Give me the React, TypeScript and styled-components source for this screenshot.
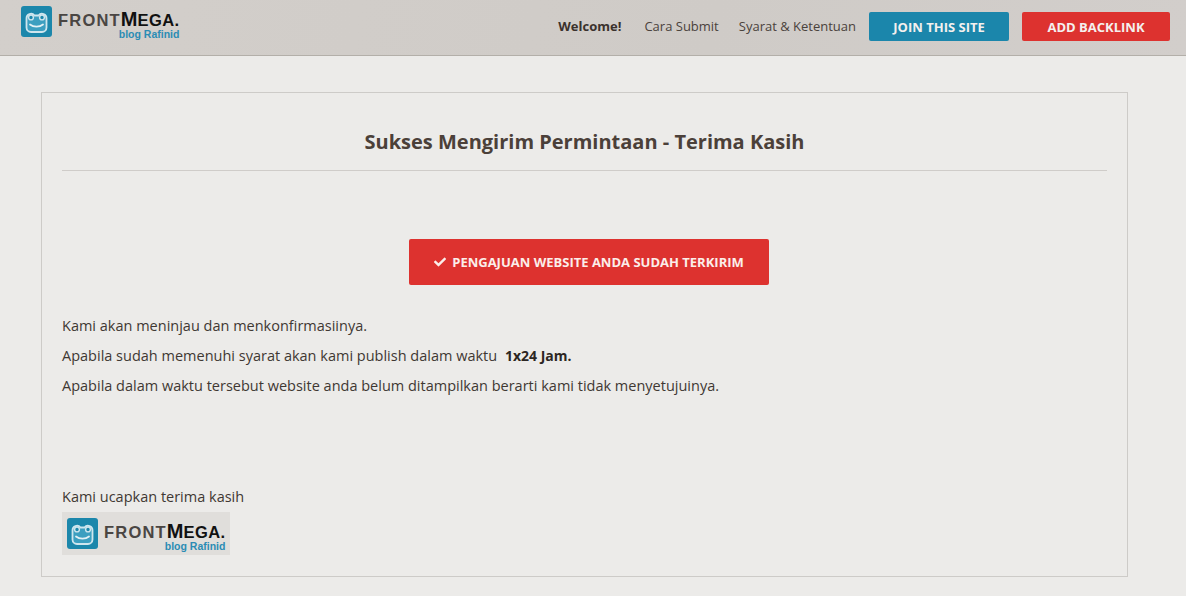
import { FaCheck } from "react-icons/fa";
import styled, { createGlobalStyle } from "styled-components";

const GlobalStyle = createGlobalStyle`
  html, body {
    margin: 0;
    padding: 0;
    background: #ecebe9;
    font-family: "Open Sans", "Liberation Sans", sans-serif;
    color: #3f3833;
  }
`;

const Header = styled.header`
  height: 56px;
  box-sizing: border-box;
  display: flex;
  align-items: flex-start;
  justify-content: space-between;
  padding: 6px 16px 0 21px;
  background: linear-gradient(100deg, #d3cfcb, #cfcbc7 60%, #d2cecb);
  border-bottom: 1px solid #b3afa9;
`;

const Nav = styled.nav`
  display: flex;
  align-items: center;
  height: 29px;
  margin-top: 6px;
`;

const NavItem = styled.a<{ $bold?: boolean; $gap: number }>`
  font-size: 13px;
  font-weight: ${(p) => (p.$bold ? 700 : 400)};
  color: ${(p) => (p.$bold ? "#3a322d" : "#4a423c")};
  margin: 0 ${(p) => p.$gap}px 2px 0;
  white-space: nowrap;
`;

const NavButton = styled.a<{ $color: string; $width: number; $gap?: number }>`
  display: flex;
  align-items: center;
  justify-content: center;
  height: 29px;
  width: ${(p) => p.$width}px;
  margin-left: ${(p) => p.$gap || 0}px;
  background: ${(p) => p.$color};
  border-radius: 2px;
  color: #f4f0ee;
  font-size: 13px;
  font-weight: 700;
`;

const LogoWrap = styled.div`
  display: flex;
  align-items: flex-start;
  gap: 6px;
`;

const LogoWords = styled.div`
  display: flex;
  flex-direction: column;
  align-items: flex-end;
  padding-top: 3px;
`;

const LogoName = styled.div`
  font-family: "Liberation Sans", sans-serif;
  font-weight: 700;
  font-size: 20px;
  line-height: 20px;
  color: #111;
  white-space: nowrap;
`;

const LogoSmall = styled.span<{ $grey?: boolean; $spacing: number }>`
  font-size: 16.5px;
  text-transform: uppercase;
  color: ${(p) => (p.$grey ? "#4a4643" : "#111")};
  letter-spacing: ${(p) => p.$spacing}px;
`;

const LogoTag = styled.div`
  font-family: "Liberation Sans", sans-serif;
  font-weight: 700;
  font-size: 10.5px;
  line-height: 9px;
  color: #2b8cb4;
`;

const Card = styled.main`
  box-sizing: border-box;
  height: 485px;
  margin: 36px 58px 0 41px;
  padding: 0 20px;
  border: 1px solid #cdcbc8;
`;

const Title = styled.h1`
  margin: 0;
  height: 78px;
  box-sizing: border-box;
  padding-top: 34px;
  text-align: center;
  font-size: 20px;
  line-height: 30px;
  font-weight: 700;
  color: #4b4039;
  border-bottom: 1px solid #cfccc9;
`;

const NoticeRow = styled.div`
  display: flex;
  justify-content: center;
  padding: 68px 0 26px 9px;
`;

const Notice = styled.div`
  display: flex;
  align-items: center;
  justify-content: center;
  gap: 6px;
  width: 360px;
  height: 46px;
  border-radius: 2px;
  background: #dd322f;
  color: #fbeeea;
  font-size: 13px;
  font-weight: 700;
  svg {
    width: 12px;
    height: 12px;
  }
`;

const Line = styled.p`
  margin: 0;
  font-size: 14.5px;
  line-height: 30px;
  color: #3f3833;
`;

const Strong = styled.strong`
  margin-left: 4px;
  font-size: 14px;
  font-weight: 700;
  color: #2c2622;
`;

const Thanks = styled(Line)`
  margin-top: 81px;
`;

const SignBox = styled.div`
  display: inline-flex;
  box-sizing: border-box;
  width: 168px;
  height: 43px;
  padding: 6px 0 0 5px;
  background: #e0dedb;
`;

function Logo() {
  return (
    <LogoWrap>
      <svg width="31" height="31" viewBox="0 0 31 31">
        <rect width="31" height="31" rx="3" fill="#1c87ab" />
        <path
          d="M5.500 12.500a4.500 4.500 0 0 1 8-3h4a4.500 4.500 0 0 1 8 3v9a4.500 4.500 0 0 1-4.500 4.500h-11a4.500 4.500 0 0 1-4.500-4.500z"
          fill="#3c9fc0"
          stroke="#cfe6ee"
          strokeWidth="1.800"
        />
        <circle cx="10" cy="11.500" r="2.400" fill="#1c87ab" stroke="#cfe6ee" strokeWidth="1.400" />
        <circle cx="21" cy="11.500" r="2.400" fill="#1c87ab" stroke="#cfe6ee" strokeWidth="1.400" />
        <path d="M9 18.500c3.500 2.800 9.500 2.800 13 0" fill="none" stroke="#e3f1f5" strokeWidth="1.800" strokeLinecap="round" />
      </svg>
      <LogoWords>
        <LogoName>
          <LogoSmall $grey $spacing={1.2}>Front</LogoSmall>M<LogoSmall $spacing={0.4}>ega.</LogoSmall>
        </LogoName>
        <LogoTag>blog Rafinid</LogoTag>
      </LogoWords>
    </LogoWrap>
  );
}

export default function App() {
  return (
    <>
      <GlobalStyle />
      <Header>
        <Logo />
        <Nav>
          <NavItem $bold $gap={23}>Welcome!</NavItem>
          <NavItem $gap={20}>Cara Submit</NavItem>
          <NavItem $gap={13}>Syarat &amp; Ketentuan</NavItem>
          <NavButton $color="#1b86ab" $width={140}>JOIN THIS SITE</NavButton>
          <NavButton $color="#dd322f" $width={148} $gap={13}>ADD BACKLINK</NavButton>
        </Nav>
      </Header>
      <Card>
        <Title>Sukses Mengirim Permintaan - Terima Kasih</Title>
        <NoticeRow>
          <Notice>
            <FaCheck />
            PENGAJUAN WEBSITE ANDA SUDAH TERKIRIM
          </Notice>
        </NoticeRow>
        <Line>Kami akan meninjau dan menkonfirmasiinya.</Line>
        <Line>
          Apabila sudah memenuhi syarat akan kami publish dalam waktu <Strong>1x24 Jam.</Strong>
        </Line>
        <Line>Apabila dalam waktu tersebut website anda belum ditampilkan berarti kami tidak menyetujuinya.</Line>
        <Thanks>Kami ucapkan terima kasih</Thanks>
        <SignBox>
          <Logo />
        </SignBox>
      </Card>
    </>
  );
}
